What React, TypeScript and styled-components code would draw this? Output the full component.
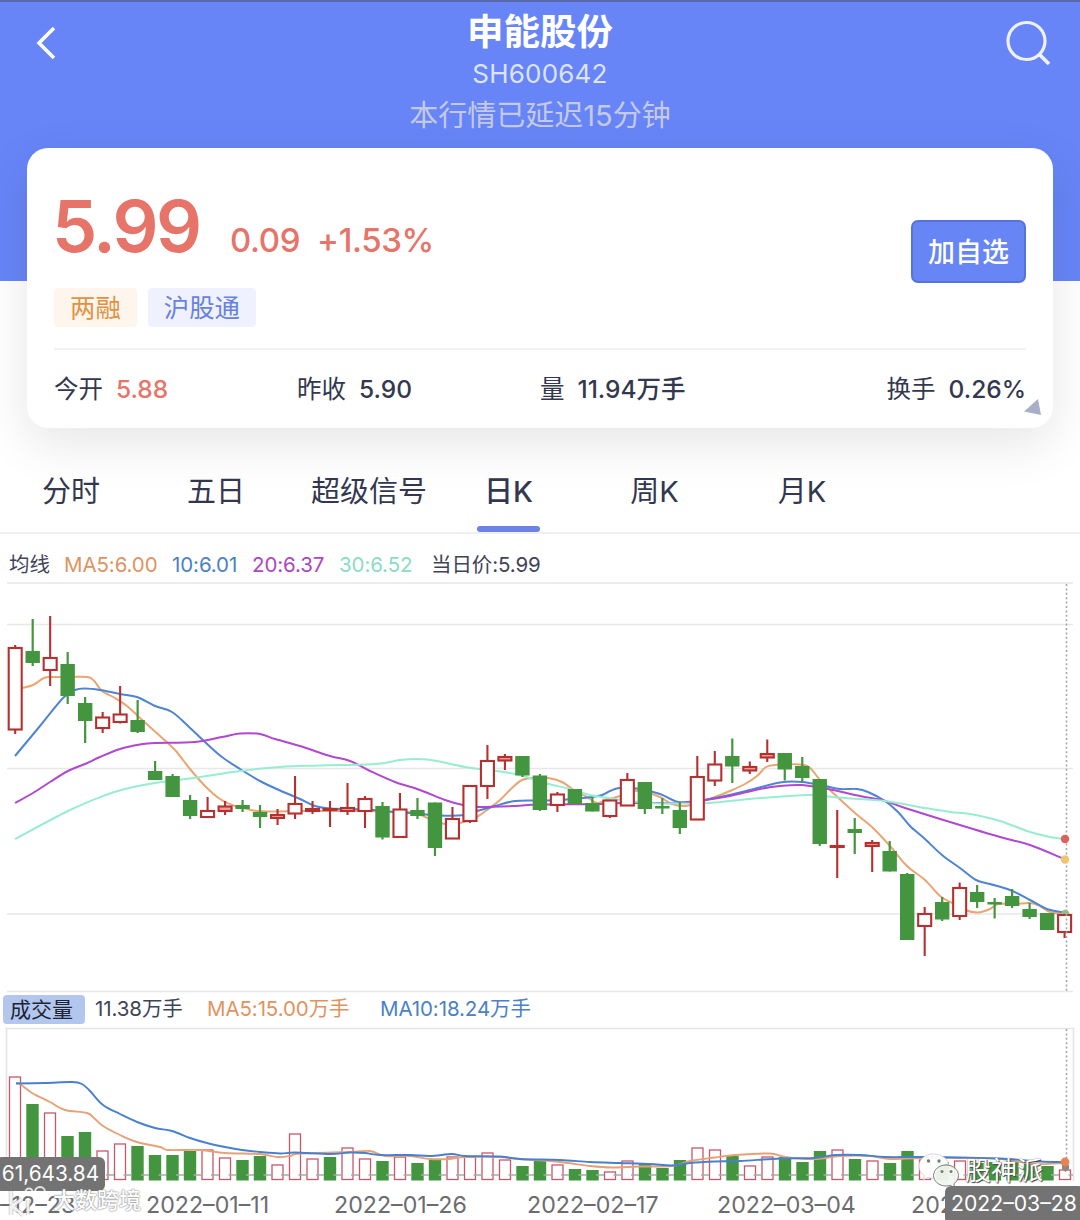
import styled, { createGlobalStyle } from "styled-components";

type Point = [number, number];
// up?, high, body top, body bottom, low
type CandleData = [0 | 1, number, number, number, number];

const CANDLES: CandleData[] = [
  [1, 645, 648, 729.5, 734],
  [0, 619, 651, 663, 666],
  [1, 616, 658, 670, 686],
  [0, 652, 664, 696, 704],
  [0, 697, 703, 721, 743],
  [1, 712, 717.5, 728, 733],
  [1, 686, 714.5, 722, 723.5],
  [0, 700, 720, 732, 733],
  [0, 761, 771, 780, 780],
  [0, 774, 776, 797, 797],
  [0, 795, 800, 816, 819],
  [1, 797, 811, 817, 817],
  [1, 801, 806.5, 811, 815],
  [0, 800, 805, 809, 812],
  [0, 805, 812, 817, 828],
  [1, 809, 815, 818, 825],
  [1, 776, 804, 813.5, 819],
  [1, 801, 809, 811, 814],
  [1, 801, 809, 810, 827],
  [1, 783, 808, 811, 815],
  [1, 796, 799, 811, 828],
  [0, 802, 806, 837.5, 839.5],
  [1, 793, 809.5, 837, 837],
  [0, 798, 810, 816, 819],
  [0, 802.5, 802.5, 848, 856],
  [1, 807, 819, 838.5, 838.5],
  [1, 786, 786, 821, 823],
  [1, 745, 761, 786, 799],
  [1, 754, 757, 760.5, 770],
  [0, 756, 756, 775.5, 777],
  [0, 774, 775.5, 810, 811],
  [1, 792, 794.5, 805, 812],
  [0, 789, 789, 804, 804],
  [0, 797, 803, 811.5, 811.5],
  [1, 800, 800.5, 816, 818],
  [1, 773, 780, 805.5, 805.5],
  [0, 782, 782, 809, 814],
  [0, 798, 806, 808.5, 814],
  [0, 802, 810, 828, 834],
  [1, 756, 777, 819.5, 819.5],
  [1, 751, 764.5, 780.5, 786],
  [0, 738.5, 756, 766.5, 783],
  [1, 761.5, 767, 770.5, 774],
  [1, 739.5, 754, 757.5, 762],
  [0, 753, 753, 769.5, 780.5],
  [0, 757, 766, 778, 782],
  [0, 779, 779, 844, 846],
  [1, 810, 846, 847, 878],
  [0, 818, 829, 833, 854],
  [1, 840, 843, 846, 872],
  [0, 841, 851, 871.5, 871.5],
  [0, 873, 874, 940, 940],
  [1, 907, 914, 926, 956],
  [0, 897, 902, 919.5, 921],
  [1, 882.5, 888, 916, 920],
  [0, 885, 892, 902, 908],
  [0, 898, 902, 904.5, 918.5],
  [0, 889, 896, 906, 908],
  [0, 903, 909, 917, 919],
  [0, 913, 913, 930, 930],
  [1, 914, 915, 932, 938],
];

const VOLUMES = [
  1077, 1104, 1113, 1136, 1132, 1151, 1144, 1146, 1155, 1155, 1151, 1150, 1158, 1160, 1156, 1165, 1134, 1159, 1157,
  1148, 1159, 1161, 1157, 1163, 1160, 1157, 1157, 1153, 1160, 1166, 1161, 1165, 1169, 1170, 1172, 1161, 1163, 1168,
  1160, 1148, 1150, 1156, 1166, 1157, 1157, 1162, 1151, 1150, 1159, 1161, 1163, 1151, 1160, 1162, 1161, 1163, 1162,
  1161, 1164, 1166, 1170,
];

// exceptions where the volume bar is not coloured like its candle
const VOLUME_UP: { [key: number]: boolean } = { 18: false };

const MA5: Point[] = [
  [16, 690], [22, 688], [33, 685], [44, 678], [52, 677], [70, 677], [88, 677], [95, 682], [102, 691], [115, 698],
  [127, 706], [140, 718], [160, 736], [175, 750], [190, 769], [205, 786], [220, 799], [235, 806], [247, 809],
  [257, 811], [275, 811.5], [300, 811], [330, 811], [365, 811], [395, 812], [415, 813], [432, 820], [445, 824],
  [460, 823], [475, 818], [487, 810], [500, 800], [512, 788], [522, 780], [533, 778], [548, 778], [562, 782],
  [575, 791], [587, 797], [597, 803], [606, 800], [620, 796], [632, 791], [645, 792], [660, 797], [672, 804],
  [685, 806], [700, 802], [715, 797], [730, 791], [745, 784], [757, 776], [766, 767], [775, 765], [800, 764.5],
  [810, 768], [820, 780], [830, 790], [855, 813], [873, 828], [890, 846], [907, 866], [925, 880], [940, 896],
  [952, 903], [965, 910], [978, 912.5], [990, 909], [998, 904], [1015, 904], [1030, 903], [1040, 906], [1050, 912],
  [1064, 914],
];

const MA10: Point[] = [
  [15, 756], [40, 726], [63, 698], [75, 690], [85, 688.5], [100, 690], [120, 694], [137, 697], [155, 706],
  [172, 712], [188, 726], [205, 742], [222, 757], [240, 769], [260, 781], [280, 790.5], [300, 799], [315, 806],
  [330, 808.5], [365, 809.5], [395, 812], [410, 813], [440, 815.5], [465, 815], [477, 811], [495, 806], [515, 801],
  [540, 800.5], [560, 800], [598, 796], [610, 791], [620, 788], [640, 789], [660, 794], [678, 802], [697, 801],
  [720, 797], [750, 790], [780, 782.5], [802, 782], [825, 786], [840, 789], [857, 789], [868, 792], [885, 801],
  [898, 812], [910, 826], [925, 839], [942, 855], [960, 868], [976, 880], [990, 884], [1010, 890], [1030, 900],
  [1047, 909], [1064, 912.5],
];

const MA20: Point[] = [
  [15, 803], [33, 793], [50, 782], [68, 771], [85, 764], [100, 757], [120, 749], [140, 744.5], [155, 743],
  [195, 742], [222, 737], [240, 733.5], [260, 734], [275, 739], [300, 746], [330, 756], [350, 761], [370, 771],
  [395, 782], [420, 790], [445, 800], [463, 805], [478, 807], [515, 806], [540, 804.5], [600, 804], [620, 803],
  [650, 803], [680, 803], [705, 800], [730, 796], [760, 789], [780, 786], [802, 785], [828, 789], [860, 796],
  [885, 801], [905, 808], [950, 822], [1000, 837], [1030, 845], [1064, 859],
];

const MA30: Point[] = [
  [15, 839], [68, 811], [103, 796], [125, 789], [155, 783], [178, 780], [200, 777], [240, 771], [280, 767],
  [320, 765.5], [375, 764], [400, 760], [418, 759], [437, 761], [465, 767], [500, 771.5], [520, 775], [545, 783],
  [570, 789], [590, 795], [615, 799], [650, 803], [680, 803.5], [710, 803], [750, 799], [790, 796], [810, 795],
  [845, 798], [885, 801], [925, 808], [950, 812], [970, 814], [1000, 821], [1030, 832], [1050, 837], [1064, 839],
];

const VOLUME_MA5: Point[] = [
  [16, 1083], [20, 1084], [32, 1093], [50, 1102], [65, 1110], [87, 1113], [95, 1119], [103, 1126], [120, 1135],
  [137, 1142], [160, 1147], [168, 1150], [200, 1150], [225, 1153], [260, 1154], [277, 1157], [290, 1156],
  [300, 1153.5], [350, 1152], [370, 1151], [385, 1156], [410, 1156], [430, 1159], [450, 1159], [465, 1157],
  [500, 1157], [520, 1159], [560, 1162], [590, 1166], [612, 1167.5], [640, 1166.5], [672, 1166], [690, 1161],
  [715, 1157.5], [735, 1155], [770, 1153.5], [785, 1157], [815, 1159], [840, 1156], [870, 1156], [890, 1159],
  [920, 1158], [960, 1158], [1000, 1159], [1035, 1164], [1064, 1163],
];

const VOLUME_MA10: Point[] = [
  [16, 1083.5], [45, 1083], [72, 1082], [82, 1084], [90, 1091], [103, 1105], [120, 1114], [137, 1122], [155, 1128],
  [172, 1131], [190, 1138], [207, 1143], [225, 1147], [242, 1150], [260, 1152], [280, 1153.5], [295, 1152.5],
  [330, 1154], [350, 1152.5], [365, 1153], [380, 1155], [410, 1155], [430, 1156], [452, 1154], [465, 1156],
  [500, 1156.5], [520, 1159], [560, 1160], [590, 1162], [620, 1163], [650, 1164], [672, 1165.5], [690, 1163],
  [715, 1161.5], [740, 1161], [780, 1158.5], [815, 1158], [835, 1155], [860, 1155], [885, 1157], [920, 1157],
  [960, 1157.5], [1000, 1158.5], [1040, 1161.5], [1064, 1162],
];

const TABS = ["分时", "五日", "超级信号", "日K", "周K", "月K"];

const STATS = [
  { label: "今开", value: "5.88", red: true },
  { label: "昨收", value: "5.90" },
  { label: "量", value: "11.94万手" },
  { label: "换手", value: "0.26%" },
];

const PRICE_LEGEND = [
  { text: "均线", color: "#3f4358", width: 55 },
  { text: "MA5:6.00", color: "#e0935f", width: 108 },
  { text: "10:6.01", color: "#4a80c8", width: 80 },
  { text: "20:6.37", color: "#ad45c4", width: 87 },
  { text: "30:6.52", color: "#8addc2", width: 92 },
  { text: "当日价:5.99", color: "#3f4358", width: 120 },
];

const DATES = ["–12–23", "2022–01–11", "2022–01–26", "2022–02–17", "2022–03–04", "2022–03–21"];

const RED = "#b5302f";
const GREEN = "#43963f";

const toPath = (points: Point[]) =>
  points.reduce((path, [x, y], i) => {
    if (i === 0) return `M${x} ${y}`;
    const [px, py] = points[i - 1];
    const [bx, by] = points[i - 2] ?? points[i - 1];
    const [nx, ny] = points[i + 1] ?? points[i];
    const c1 = `${px + (x - bx) / 6} ${py + (y - by) / 6}`;
    const c2 = `${x - (nx - px) / 6} ${y - (ny - py) / 6}`;
    return `${path}C${c1} ${c2} ${x} ${y}`;
  }, "");

const Candle = ({ index, data }: { index: number; data: CandleData }) => {
  const [up, high, top, bottom, low] = data;
  const x = 15.2 + index * 17.49;

  if (!up) {
    return (
      <g fill={GREEN}>
        <rect x={x - 1.1} y={high} width={2.2} height={low - high} />
        <rect x={x - 7.2} y={top} width={14.4} height={bottom - top} />
      </g>
    );
  }

  return (
    <g stroke={RED} strokeWidth={2.1}>
      <path d={`M${x} ${high}V${top}M${x} ${bottom}V${low}`} />
      <rect x={x - 6.5} y={top} width={13} height={bottom - top} fill={bottom - top < 5 ? "#ef9d98" : "#fff"} />
    </g>
  );
};

const PriceChart = () => (
  <PricePlot viewBox="0 582 1080 412">
    <path d="M7 583H1073M7 624.5H1073M7 768.5H1073M7 914H1073M7 991.5H1073" stroke="#e7e7e9" strokeWidth={1.6} />
    <g fill="none" strokeWidth={2}>
      <path d={toPath(MA5)} stroke="#eba572" />
      <path d={toPath(MA10)} stroke="#4d84d4" />
      <path d={toPath(MA20)} stroke="#b148d0" />
      <path d={toPath(MA30)} stroke="#98ecd1" />
    </g>
    {CANDLES.map((data, i) => (
      <Candle key={i} index={i} data={data} />
    ))}
    <path d="M1066.5 584V991" stroke="#a5a5aa" strokeWidth={1.6} strokeDasharray="2 2.4" />
    <circle cx={1065} cy={839} r={4.2} fill="#dc625b" />
    <circle cx={1065} cy={859.5} r={4.2} fill="#efc66f" />
    <path d="M1061 914a4.2 4.2 0 0 1 8.4 0z" fill="#91bd8b" />
  </PricePlot>
);

const VolumeChart = () => (
  <VolumePlot viewBox="0 1026 1080 160">
    <path d="M6.5 1181V1028.5H1073.5V1181" fill="none" stroke="#e5e5e8" strokeWidth={1.6} />
    {VOLUMES.map((top, i) => {
      const x = 15 + i * 17.5;
      const up = VOLUME_UP[i] ?? !!CANDLES[i][0];
      return up ? (
        <rect key={i} x={x - 5.5} y={top} width={11} height={1179.5 - top} fill="#fff" stroke="#c8576a" strokeWidth={1.3} />
      ) : (
        <rect key={i} x={x - 6.2} y={top} width={12.4} height={1180.5 - top} fill={GREEN} />
      );
    })}
    <path d="M100 1175H1073" stroke="#a6aba4" strokeWidth={1.5} strokeDasharray="8 9.5" strokeDashoffset={-6} />
    <g fill="none" strokeWidth={1.9}>
      <path d={toPath(VOLUME_MA5)} stroke="#e6a176" />
      <path d={toPath(VOLUME_MA10)} stroke="#4880cf" />
    </g>
    <path d="M1066.5 1029V1164" stroke="#a5a5aa" strokeWidth={1.6} strokeDasharray="2 2.4" />
    <path d="M1062 1165h7v4l-3.5 3-3.5-3z" fill="#8c8a80" />
    <circle cx={1065} cy={1162} r={4.4} fill="#e8824f" />
  </VolumePlot>
);

const WechatLogo = () => (
  <svg width={42} height={36} viewBox="0 0 42 36">
    <path
      d="M15 1C7 1 1 6.5 1 13.2c0 4 2 7.300 5.4 9.6L5 27l5-2.6c2 .6 4 .8 6.5.6 2-9 8-13.5 14-13.5C29.5 5 23 1 15 1z"
      fill="#fffffff0"
      stroke="#c4c5c2"
      strokeWidth={0.7}
    />
    <path
      d="M28 12c-7 0-12.500 4.8-12.500 10.5S21 33 28 33c1.5 0 3-.2 4.3-.6L37 35l-1.2-4.2c3-2 4.700-4.900 4.700-8.300C40.500 16.8 35 12 28 12z"
      fill="#f3f5f1f0"
      stroke="#7d8179"
      strokeWidth={1}
    />
    <g fill="#777c74">
      <circle cx={10.5} cy={8} r={1.7} />
      <circle cx={21} cy={8} r={1.7} />
      <circle cx={24} cy={18.5} r={1.5} />
      <circle cx={33} cy={18.5} r={1.5} />
    </g>
  </svg>
);

const SiteLogo = () => (
  <svg width={46} height={34} viewBox="0 0 46 34">
    <g fill="none" stroke="#8d8d8d" strokeOpacity={0.5} strokeWidth={4.4}>
      <path d="M4 7v24M15 15 5 22l11 9M21 16v15" />
    </g>
    <g fill="none" stroke="#fff" strokeOpacity={0.8} strokeWidth={3}>
      <path d="M4 7v24M15 15 5 22l11 9M21 16v15" />
      <circle cx={22} cy={8} r={3.5} strokeWidth={2} />
      <circle cx={33} cy={8} r={5} strokeWidth={2} />
    </g>
  </svg>
);

const App = () => (
  <Page>
    <GlobalStyle />
    <Header>
      <BackIcon viewBox="0 0 24 36">
        <path d="M20 3 5 18l15 15" fill="none" stroke="#fff" strokeWidth={3.6} />
      </BackIcon>
      <Heading>
        <Name>申能股份</Name>
        <Code>SH600642</Code>
        <Notice>本行情已延迟15分钟</Notice>
      </Heading>
      <SearchIcon viewBox="0 0 46 46">
        <g fill="none" stroke="#eef1ff" strokeWidth={3.2}>
          <circle cx={21.5} cy={21} r={18.5} />
          <path d="M34.5 34.5 44 44" strokeWidth={3.8} />
        </g>
      </SearchIcon>
    </Header>

    <Card>
      <Quote>
        <div>
          <Prices>
            <Price>5.99</Price>
            <Change>0.09</Change>
            <Change>+1.53%</Change>
          </Prices>
          <Tags>
            <Tag $tone="orange">两融</Tag>
            <Tag $tone="blue">沪股通</Tag>
          </Tags>
        </div>
        <AddButton>加自选</AddButton>
      </Quote>
      <Stats>
        {STATS.map(({ label, value, red }) => (
          <Stat key={label}>
            {label}
            <StatValue $red={red}>{value}</StatValue>
          </Stat>
        ))}
      </Stats>
      <Corner viewBox="0 0 18 18">
        <path d="M14 1 0 13.5 17 17z" fill="#aaaec8" />
      </Corner>
    </Card>

    <TabBar>
      {TABS.map(tab => (
        <Tab key={tab} $active={tab === "日K"}>
          {tab}
        </Tab>
      ))}
    </TabBar>

    <PriceLegend>
      {PRICE_LEGEND.map(({ text, color, width }) => (
        <LegendItem key={text} $color={color} $width={width}>
          {text}
        </LegendItem>
      ))}
    </PriceLegend>
    <PriceChart />

    <VolumeLegend>
      <VolumeTitle>成交量</VolumeTitle>
      <LegendItem $color="#3f4358" $width={112}>
        11.38万手
      </LegendItem>
      <LegendItem $color="#e0935f" $width={173}>
        MA5:15.00万手
      </LegendItem>
      <LegendItem $color="#4a80c8" $width={160}>
        MA10:18.24万手
      </LegendItem>
    </VolumeLegend>
    <VolumeChart />

    <DateAxis>
      {DATES.map(date => (
        <span key={date}>{date}</span>
      ))}
    </DateAxis>

    <VolumeTip>61,643.84</VolumeTip>
    <SiteMark>
      <SiteLogo />
      大数跨境
    </SiteMark>
    <Account>
      <WechatLogo />
      股神派
    </Account>
    <DateTip>2022–03–28</DateTip>
  </Page>
);

const GlobalStyle = createGlobalStyle`
  * {
    box-sizing: border-box;
  }

  body {
    margin: 0;
    background: #fff;
    font-family: Inter, "Noto Sans CJK SC", sans-serif;
  }

  svg {
    display: block;
  }
`;

const Page = styled.div`
  position: relative;
  width: 1080px;
  height: 1220px;
  overflow: hidden;
  color: #33384f;
`;

const Header = styled.header`
  display: flex;
  justify-content: space-between;
  height: 281px;
  padding: 9px 29px 0 34px;
  border-top: 2px solid #5a6aa8;
  background: #6785f7;
`;

const BackIcon = styled.svg`
  width: 24px;
  height: 36px;
  margin-top: 14px;
`;

const SearchIcon = styled.svg`
  width: 46px;
  height: 46px;
  margin-top: 9px;
`;

const Heading = styled.div`
  display: flex;
  flex-direction: column;
  align-items: center;
  margin-left: 17px;
`;

const Name = styled.h1`
  margin: 0;
  font-size: 36.5px;
  font-weight: 700;
  line-height: 42px;
  color: #fff;
`;

const Code = styled.div`
  font-size: 26px;
  line-height: 42px;
  letter-spacing: 0.2px;
  color: #dce3fd;
`;

const Notice = styled.div`
  font-size: 29px;
  line-height: 42px;
  color: #c4cae4;
`;

const Card = styled.section`
  position: relative;
  width: 1026px;
  height: 280px;
  margin: -133px auto 0;
  padding: 0 27px;
  border-radius: 21px;
  background: #fff;
  box-shadow: 0 16px 50px rgba(0, 0, 0, 0.1);
`;

const Quote = styled.div`
  display: flex;
  justify-content: space-between;
  height: 202px;
  border-bottom: 2px solid #f1f2f4;
`;

const Prices = styled.div`
  display: flex;
  align-items: baseline;
  height: 140px;
  padding-top: 34px;
  color: #e77469;
`;

const Price = styled.strong`
  width: 178px;
  margin-left: -2px;
  font-size: 72px;
  font-weight: 600;
  line-height: 88px;
  letter-spacing: -2.6px;
`;

const Change = styled.span`
  margin-right: 17px;
  font-size: 33px;
  font-weight: 500;
  letter-spacing: -0.4px;
`;

const Tags = styled.div`
  display: flex;
  gap: 11px;
`;

const Tag = styled.span<{ $tone: "orange" | "blue" }>`
  height: 39px;
  padding: 0 16px;
  border-radius: 4px;
  font-size: 25.4px;
  line-height: 39px;
  color: ${({ $tone }) => ($tone === "orange" ? "#e29243" : "#6680e4")};
  background: ${({ $tone }) => ($tone === "orange" ? "#fef6ec" : "#eff2fe")};
`;

const AddButton = styled.button`
  width: 115px;
  height: 63px;
  margin-top: 72px;
  padding: 0 0 3px;
  border: 2px solid #5673d9;
  border-radius: 7px;
  font-family: inherit;
  font-size: 27px;
  font-weight: 500;
  white-space: nowrap;
  color: #fff;
  background: #6785f5;
`;

const Stats = styled.div`
  display: grid;
  grid-template-columns: 243px 243px 1fr auto;
  font-size: 24.5px;
  line-height: 79px;
`;

const Stat = styled.div`
  display: flex;
  gap: 13px;
  white-space: nowrap;
`;

const StatValue = styled.span<{ $red?: boolean }>`
  font-weight: 500;
  color: ${({ $red }) => ($red ? "#e77469" : "inherit")};
`;

const Corner = styled.svg`
  position: absolute;
  right: 11px;
  bottom: 12px;
  width: 18px;
  height: 18px;
`;

const TabBar = styled.nav`
  display: grid;
  grid-template-columns: 142px 148px 158px 121px 171px 124px;
  height: 106px;
  border-bottom: 2px solid #f0f0f2;
`;

const Tab = styled.div<{ $active: boolean }>`
  display: flex;
  flex-direction: column;
  align-items: center;
  justify-content: space-between;
  padding-top: 42px;
  font-size: 29px;
  font-weight: ${({ $active }) => ($active ? 500 : 400)};
  line-height: 44px;

  &::after {
    content: "";
    width: 63px;
    height: 6px;
    border-radius: 3px;
    background: ${({ $active }) => ($active ? "#6d83e4" : "transparent")};
  }
`;

const PriceLegend = styled.div`
  display: flex;
  height: 48px;
  padding-left: 9px;
  line-height: 61px;
`;

const LegendItem = styled.span<{ $color: string; $width: number }>`
  flex: none;
  width: ${({ $width }) => $width}px;
  font-size: 20.5px;
  letter-spacing: -0.1px;
  white-space: nowrap;
  color: ${({ $color }) => $color};
`;

const PricePlot = styled.svg`
  width: 1080px;
  height: 412px;
`;

const VolumeLegend = styled.div`
  display: flex;
  height: 32px;
  padding-left: 3px;
  line-height: 29px;
`;

const VolumeTitle = styled.span`
  width: 82px;
  height: 29px;
  margin: 1px 10px 0 0;
  padding-left: 7px;
  border-radius: 4px;
  font-size: 21px;
  color: #202536;
  background: #b2c6ee;
`;

const VolumePlot = styled.svg`
  width: 1080px;
  height: 160px;
`;

const DateAxis = styled.div`
  display: grid;
  grid-template-columns: 146px 188px 193px 190px 194px 169px;
  height: 34px;
  font-size: 23.2px;
  line-height: 38px;
  white-space: nowrap;
  color: #6c6c70;
`;

const Tip = styled.div`
  position: absolute;
  border-radius: 6px;
  text-align: center;
  color: #fff;
  background: #737373;
`;

const VolumeTip = styled(Tip)`
  left: -4px;
  top: 1157px;
  width: 109px;
  height: 34px;
  font-size: 20.8px;
  line-height: 34px;
`;

const DateTip = styled(Tip)`
  left: 945px;
  top: 1186px;
  width: 139px;
  height: 38px;
  padding-left: 6px;
  font-size: 21.2px;
  line-height: 35px;
  text-align: left;
`;

const SiteMark = styled.div`
  position: absolute;
  left: 7px;
  top: 1181px;
  display: flex;
  align-items: center;
  font-size: 22px;
  font-weight: 500;
  line-height: 39px;
  color: #fff;
  text-shadow: 0 0 2px #777, 0 0 1px #999;
`;

const Account = styled.div`
  position: absolute;
  left: 918px;
  top: 1153px;
  display: flex;
  align-items: center;
  gap: 5px;
  font-size: 26px;
  line-height: 36px;
  color: #fff;
  text-shadow: 1px 1px 1px #444, 0 0 1px #666;
`;

export default App;
